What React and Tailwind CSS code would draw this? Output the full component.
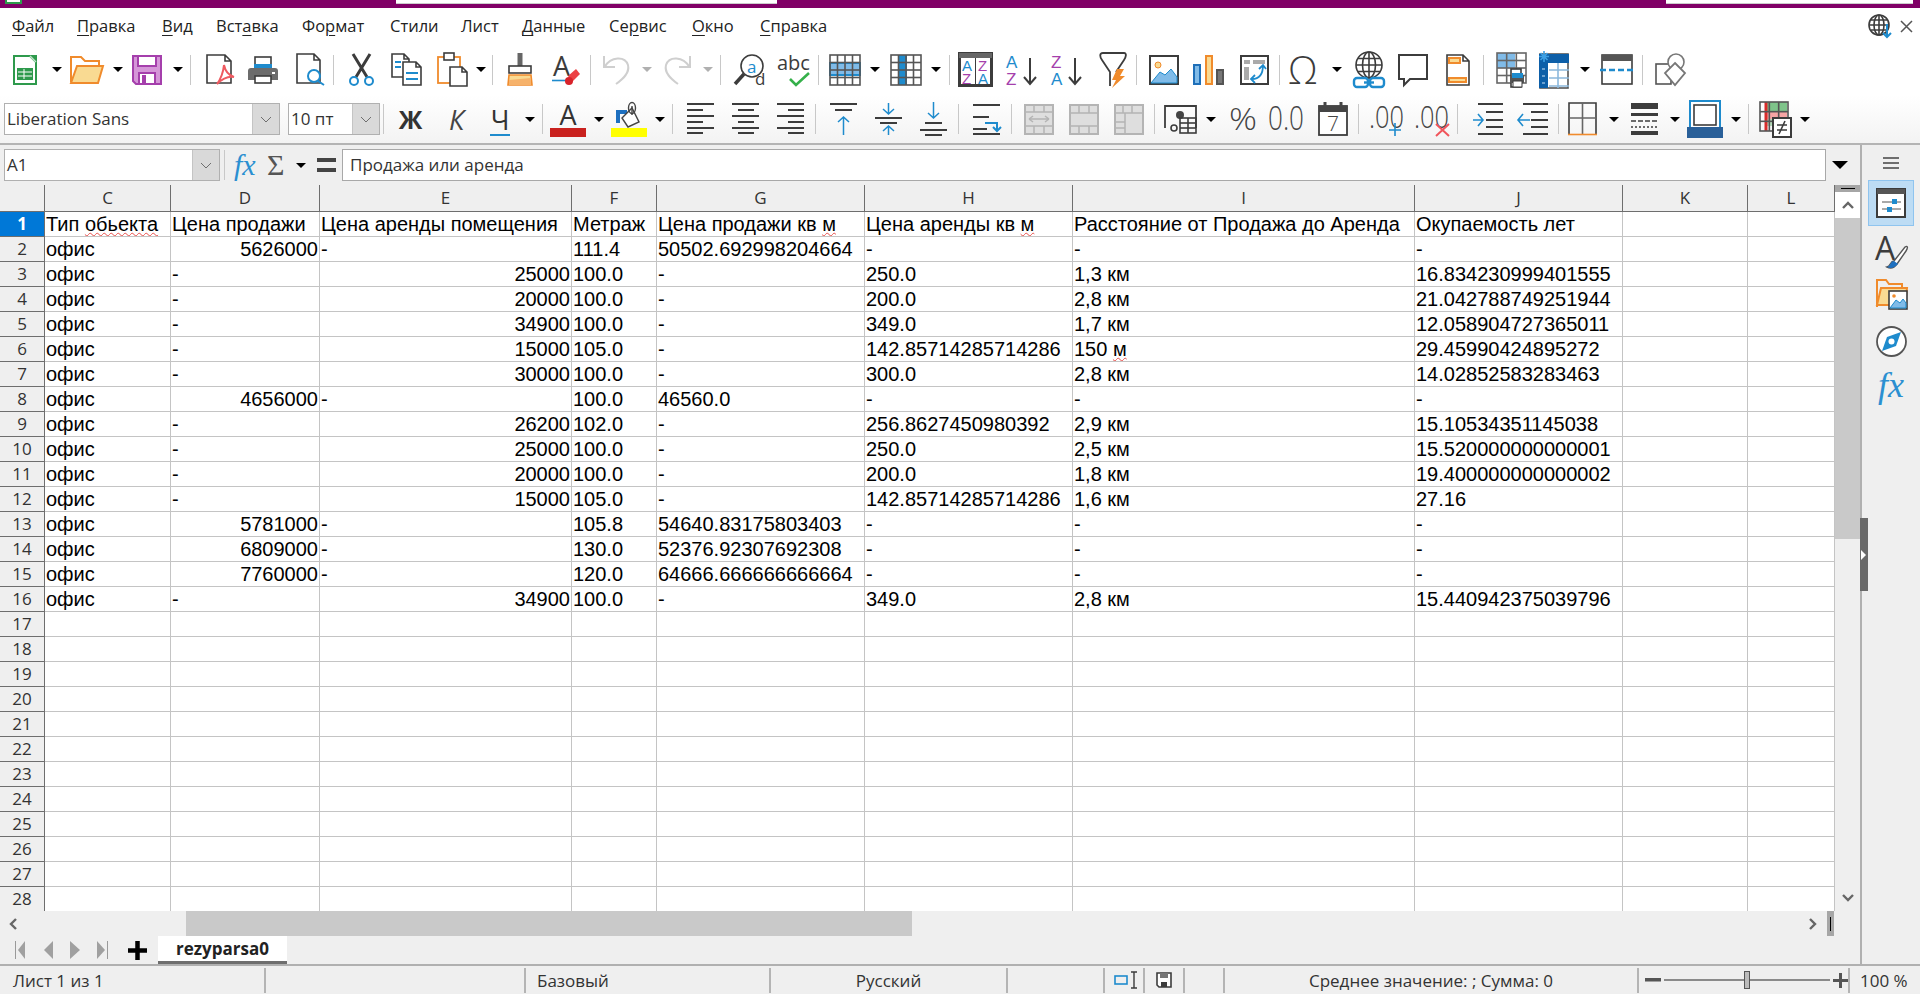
import React from "react";

const D = "#3c3c3c";
const B = "#1e8bcd";
const LB = "#80bbe8";
const O = "#f08b2c";
const LO = "#f9da92";
const P = "#a53fac";
const G = "#b4b4b4";

const Svg = ({ w, h, className = "", children }) => (
  <svg width={w} height={h} viewBox={`0 0 ${w} ${h}`} fill="none" className={`shrink-0 overflow-visible ${className}`}>
    {children}
  </svg>
);

const Caret = ({ className = "", gray }) => (
  <Svg w={10} h={5} className={className}>
    <polygon points="0,0 10,0 5,5" fill={gray ? "#b0b0b0" : "#000"} />
  </Svg>
);

const Sep = ({ className = "" }) => <div className={`w-px h-[30px] shrink-0 bg-[#c8c8c8] ${className}`} />;

const Doc = ({ w = 24, h = 30, x = 1, y = 1, fold = 6, stroke = D, fill = "#fff" }) => (
  <path
    d={`M${x} ${y}H${x + w - fold}L${x + w} ${y + fold}V${y + h}H${x}ZM${x + w - fold} ${y}V${y + fold}H${x + w}`}
    stroke={stroke}
    strokeWidth="1.6"
    fill={fill}
  />
);

const Grid = ({ x = 1, y = 1, w = 30, h = 30, cols = 3, rows = 3, color = D, sw = 1.6 }) => (
  <g stroke={color} strokeWidth={sw}>
    <rect x={x} y={y} width={w} height={h} />
    {Array.from({ length: cols - 1 }).map((_, i) => (
      <path key={i} d={`M${x + ((i + 1) * w) / cols} ${y}V${y + h}`} />
    ))}
    {Array.from({ length: rows - 1 }).map((_, i) => (
      <path key={i} d={`M${x} ${y + ((i + 1) * h) / rows}H${x + w}`} />
    ))}
  </g>
);

const Lines = ({ rows, color = D }) => (
  <g stroke={color} strokeWidth="2">
    {rows.map(([x1, x2, y], i) => (
      <path key={i} d={`M${x1} ${y}H${x2}`} />
    ))}
  </g>
);

const SheetIcon = ({ className }) => (
  <Svg w={24} h={30} className={className}>
    <path d="M1 1H17L23 7V29H1Z" fill="#fff" stroke="#2e9a4c" strokeWidth="2" />
    <path d="M16 0H24V8Z" fill="#2e9a4c" />
    <path d="M17 1L23 7" stroke="#bfe3c8" strokeWidth="1.5" />
    <rect x="4" y="13" width="16" height="12" fill="#2e9a4c" />
    <path d="M5 17H19M5 21H19M11 14V24" stroke="#fff" strokeWidth="1" />
  </Svg>
);

const FolderIcon = ({ className }) => (
  <Svg w={34} h={30} className={className}>
    <path d="M1 27V2H11L15 6H29V11" stroke={O} strokeWidth="2" />
    <path d="M7 11H33L28 28H1Z" fill={LO} stroke={O} strokeWidth="2" />
  </Svg>
);

const SaveIcon = ({ className }) => (
  <Svg w={30} h={30} className={className}>
    <path d="M1 1H29V29H4L1 26Z" fill="#d596d8" stroke={P} strokeWidth="2" />
    <rect x="6" y="1" width="18" height="10" fill="#fff" stroke={P} strokeWidth="2" />
    <rect x="7" y="18" width="16" height="11" fill="#fff" stroke={P} strokeWidth="2" />
    <rect x="10" y="20" width="4" height="9" fill={P} />
  </Svg>
);

const PdfIcon = ({ className }) => (
  <Svg w={29} h={31} className={className}>
    <Doc w={24} h={28} />
    <path d="M18 11C17 20 14 26 11 30C17 24 22 22 28 23C22 21 19 16 18 11Z" fill="#fff" stroke="#ee5a60" strokeWidth="2" />
  </Svg>
);

const PrintIcon = ({ className }) => (
  <Svg w={30} h={28} className={className}>
    <rect x="7" y="1" width="16" height="11" fill="#fff" stroke={D} strokeWidth="1.6" />
    <rect x="6" y="8" width="18" height="5" fill={B} />
    <path d="M0 15C0 13 1 12 3 12H27C29 12 30 13 30 15V24H0Z" fill="#6c6c6c" />
    <rect x="7" y="20" width="16" height="7" fill="#fff" stroke={D} strokeWidth="1.6" />
    <rect x="24" y="16" width="3" height="2" fill="#fff" />
  </Svg>
);

const PreviewIcon = ({ className }) => (
  <Svg w={29} h={33} className={className}>
    <Doc w={23} h={29} />
    <circle cx="18" cy="23" r="6" fill="#fff" stroke={B} strokeWidth="2" />
    <path d="M22 28L28 32" stroke={B} strokeWidth="2" />
  </Svg>
);

const CutIcon = ({ className }) => (
  <Svg w={27} h={34} className={className}>
    <path d="M5 1L19 24M22 1L8 24" stroke={D} strokeWidth="3" />
    <circle cx="6" cy="28" r="4" fill="#fff" stroke={B} strokeWidth="2" />
    <circle cx="21" cy="28" r="4" fill="#fff" stroke={B} strokeWidth="2" />
  </Svg>
);

const CopyIcon = ({ className }) => (
  <Svg w={31} h={33} className={className}>
    <Doc w={17} h={23} fold={5} />
    <path d="M4 9H10M4 14H10" stroke={B} strokeWidth="2" />
    <Doc x={12} y={9} w={18} h={23} fold={5} />
    <path d="M15 20H27M15 26H27" stroke={B} strokeWidth="2" />
  </Svg>
);

const PasteIcon = ({ className }) => (
  <Svg w={31} h={35} className={className}>
    <rect x="1" y="5" width="22" height="26" stroke={O} strokeWidth="1.8" />
    <rect x="7" y="1" width="10" height="7" fill="#fff" stroke={D} strokeWidth="1.6" />
    <Doc x={13} y={15} w={17} h={19} fold={5} />
  </Svg>
);

const BrushIcon = ({ className }) => (
  <Svg w={24} h={33} className={className}>
    <path d="M12 0V14" stroke="#666" strokeWidth="5" />
    <rect x="1" y="13" width="22" height="7" fill="#fff" stroke={D} strokeWidth="1.6" />
    <path d="M1 22H23L24 32H0Z" fill={LO} stroke={O} strokeWidth="1.6" />
    <path d="M1 27L23 25V32H1Z" fill="#f6b26b" />
  </Svg>
);

const ClearIcon = ({ className }) => (
  <Svg w={28} h={32} className={className}>
    <text x="1" y="22" fontSize="27" fill={D} className="font-['Open_Sans',sans-serif]">A</text>
    <path d="M0 26.5H15" stroke={B} strokeWidth="1.6" />
    <path d="M16 22L24 15L28 20L20 28Z" fill="#ec4044" />
    <circle cx="17" cy="27" r="4" fill="#d8232a" />
  </Svg>
);

const UndoIcon = ({ className, flip }) => (
  <Svg w={27} h={33} className={`${flip ? "-scale-x-100" : ""} ${className}`}>
    <path d="M1 3V14H12" stroke="#cfcfcf" strokeWidth="2" />
    <path d="M1.5 14C8 3 22 3 25 12C27 20 20 26 13 31" stroke="#cfcfcf" strokeWidth="2" />
  </Svg>
);

const FindIcon = ({ className }) => (
  <Svg w={32} h={33} className={className}>
    <circle cx="19" cy="13" r="11" stroke={D} strokeWidth="1.6" fill="#fff" />
    <text x="14" y="20" fontSize="17" fill={B} className="font-['Open_Sans',sans-serif]">a</text>
    <path d="M11 21L2 31" stroke={D} strokeWidth="3.5" />
    <text x="22" y="32" fontSize="17" fill={D} className="font-['Open_Sans',sans-serif]">d</text>
  </Svg>
);

const SpellIcon = ({ className }) => (
  <Svg w={33} h={34} className={className}>
    <text x="0" y="17" fontSize="20" fill={D} className="font-['Open_Sans',sans-serif]">abc</text>
    <path d="M13 26L19 32L32 20" stroke="#35b04a" strokeWidth="2.6" />
  </Svg>
);

const RowIcon = ({ className }) => (
  <Svg w={32} h={32} className={className}>
    <rect x="1" y="9" width="30" height="12" fill={LB} />
    <rect x="1" y="9" width="30" height="12" stroke={B} strokeWidth="2" />
    <Grid w={30} h={30} cols={4} rows={4} color="#555" />
  </Svg>
);

const ColIcon = ({ className }) => (
  <Svg w={32} h={32} className={className}>
    <rect x="9" y="1" width="8" height="30" fill={B} />
    <Grid w={30} h={30} cols={4} rows={4} color="#555" />
  </Svg>
);

const SortLetter = ({ x, y, c, t, s = 17 }) => (
  <text x={x} y={y} fontSize={s} fill={c} className="font-['Liberation_Sans',sans-serif]">{t}</text>
);

const SortIcon = ({ className }) => (
  <Svg w={35} h={35} className={className}>
    <rect x="1.5" y="1.5" width="32" height="32" fill="#fff" stroke={D} strokeWidth="3" />
    <rect x="1" y="1" width="33" height="5" fill="#666" />
    <path d="M17.5 6V33" stroke={D} />
    <SortLetter x={4} y={19} c={B} t="A" s={15} />
    <SortLetter x={4} y={32} c={P} t="Z" s={15} />
    <SortLetter x={20} y={19} c={P} t="Z" s={15} />
    <SortLetter x={20} y={32} c={B} t="A" s={15} />
  </Svg>
);

const SortDirIcon = ({ className, desc }) => (
  <Svg w={31} h={34} className={className}>
    <SortLetter x={0} y={15} c={desc ? P : B} t={desc ? "Z" : "A"} />
    <SortLetter x={0} y={32} c={desc ? B : P} t={desc ? "A" : "Z"} />
    <path d="M24 5V31M18 24L24 31L30 24" stroke={D} strokeWidth="2" />
  </Svg>
);

const FilterIcon = ({ className }) => (
  <Svg w={30} h={36} className={className}>
    <path d="M5 1H26C29 1 28 5 26 8L18 20M5 1C1 1 2 5 4 8L12 20V34" stroke={D} strokeWidth="1.8" />
    <path d="M26 17H19L14 28H18L14 36L27 24H22Z" fill={O} />
  </Svg>
);

const ImageIcon = ({ className }) => (
  <Svg w={30} h={30} className={className}>
    <rect x="1" y="1" width="28" height="28" fill="#fff" stroke={D} strokeWidth="2" />
    <circle cx="9" cy="10" r="3" fill={LO} stroke={O} />
    <path d="M2 28L11 17L16 20L22 14L28 22V28Z" fill={LB} stroke={B} />
  </Svg>
);

const ChartIcon = ({ className }) => (
  <Svg w={31} h={30} className={className}>
    <rect x="1" y="10" width="6" height="19" fill={LB} stroke="#1e6fb8" strokeWidth="2" />
    <rect x="13" y="1" width="6" height="28" fill={LO} stroke={O} strokeWidth="2" />
    <rect x="24" y="15" width="6" height="14" fill="#777" stroke="#555" strokeWidth="2" />
  </Svg>
);

const PivotIcon = ({ className }) => (
  <Svg w={29} h={30} className={className}>
    <rect x="1" y="1" width="27" height="28" fill="#fff" stroke={D} strokeWidth="2" />
    <path d="M4 5H10V9H4ZM13 5H25V9H13ZM4 12H9V25H4Z" fill="#aaa" />
    <path d="M12 24C20 24 23 19 23 10M19 14L23 10L26 14M15 20L11 24L15 28" stroke={B} strokeWidth="1.8" />
  </Svg>
);

const OmegaIcon = ({ className }) => (
  <Svg w={31} h={36} className={className}>
    <text x="-1" y="32" fontSize="38" fill={D} fontWeight="300" className="font-['Open_Sans',sans-serif]">Ω</text>
  </Svg>
);

const Globe = ({ cx = 16, cy = 14, r = 13, stroke = D }) => (
  <g stroke={stroke} strokeWidth="1.6">
    <circle cx={cx} cy={cy} r={r} fill="#fff" />
    <ellipse cx={cx} cy={cy} rx={r / 2} ry={r} />
    <path d={`M${cx} ${cy - r}V${cy + r}M${cx - r} ${cy}H${cx + r}M${cx - r + 2} ${cy - r / 2}H${cx + r - 2}M${cx - r + 2} ${cy + r / 2}H${cx + r - 2}`} />
  </g>
);

const LinkIcon = ({ className }) => (
  <Svg w={32} h={38} className={className}>
    <Globe />
    <rect x="1" y="27" width="14" height="9" rx="3" fill="#fff" stroke={B} strokeWidth="2.4" />
    <rect x="17" y="27" width="14" height="9" rx="3" fill="#fff" stroke={B} strokeWidth="2.4" />
    <path d="M11 31.5H21" stroke={B} strokeWidth="2.4" />
  </Svg>
);

const CommentIcon = ({ className }) => (
  <Svg w={30} h={32} className={className}>
    <path d="M1 1H29V25H12L6 31V25H1Z" fill="#fff" stroke={D} strokeWidth="2" />
  </Svg>
);

const HeaderIcon = ({ className }) => (
  <Svg w={24} h={32} className={className}>
    <Doc w={22} h={30} />
    <rect x="3" y="4" width="11" height="5" fill={LO} stroke={O} strokeWidth="2" />
    <rect x="3" y="24" width="17" height="4" fill={LO} stroke={O} strokeWidth="2" />
  </Svg>
);

const AreaIcon = ({ className }) => (
  <Svg w={31} h={36} className={className}>
    <rect x="1" y="1" width="18" height="15" fill={LB} />
    <Grid w={29} h={30} cols={3} rows={4} color="#666" />
    <rect x="15" y="17" width="10" height="18" fill="#fff" stroke={D} strokeWidth="1.6" />
    <path d="M14 26C14 24 15 23 17 23H28V31H14Z" fill="#555" />
    <rect x="16" y="21" width="11" height="5" fill={B} />
    <rect x="17" y="29" width="9" height="6" fill="#fff" stroke={D} />
  </Svg>
);

const FreezeIcon = ({ className }) => (
  <Svg w={30} h={38} className={className}>
    <rect x="1" y="3" width="28" height="34" fill="#fff" stroke="#555" strokeWidth="1.6" />
    <rect x="0" y="3" width="30" height="9" fill="#0d5fa8" />
    <rect x="0" y="3" width="9" height="34" fill="#0d5fa8" />
    <path d="M10 19H30M10 27H30M10 35H30M19 12V37M3 18H6M3 25H6M3 32H6" stroke="#8cb8dc" strokeWidth="1.6" />
    <path d="M5 0V11M0 5.5H10M1.5 2L8.5 9M8.5 2L1.5 9" stroke="#3da0e4" strokeWidth="1.6" />
  </Svg>
);

const SplitIcon = ({ className }) => (
  <Svg w={34} h={31} className={className}>
    <rect x="2" y="1" width="30" height="29" fill="#fff" stroke={D} strokeWidth="1.6" />
    <rect x="2" y="1" width="30" height="6" fill="#555" />
    <path d="M0 16H34" stroke={B} strokeWidth="2.4" strokeDasharray="6 3" />
  </Svg>
);

const ShapesIcon = ({ className }) => (
  <Svg w={31} h={33} className={className}>
    <rect x="1" y="11" width="15" height="20" fill="#fff" stroke="#555" strokeWidth="1.6" />
    <circle cx="21" cy="9" r="8" fill="#fff" stroke="#777" strokeWidth="1.6" />
    <path d="M20 10L30 20L20 32L10 20Z" fill="#fff" stroke="#777" strokeWidth="1.8" />
  </Svg>
);

const AlignIcon = ({ kind, className }) => {
  const x = kind === "left" ? [0, 16] : kind === "center" ? [6, 22] : [11, 27];
  const rows = [104, 110, 116, 122, 128, 133].map((y, i) => (i % 2 ? [x[0], x[1], y - 103] : [0, 27, y - 103]));
  return (
    <Svg w={27} h={32} className={className}>
      <Lines rows={rows} />
    </Svg>
  );
};

const VAlignIcon = ({ kind, className }) => (
  <Svg w={27} h={34} className={className}>
    {kind === "top" && (
      <>
        <Lines rows={[[0, 27, 2], [5, 22, 8]]} />
        <path d="M13.5 33V15M8 20L13.5 15L19 20" stroke={B} strokeWidth="1.5" />
      </>
    )}
    {kind === "mid" && (
      <>
        <Lines rows={[[0, 27, 16], [5, 22, 21]]} />
        <path d="M13.5 1V12M8 7L13.5 12L19 7M13.5 33V24M8 29L13.5 24L19 29" stroke={B} strokeWidth="1.5" />
      </>
    )}
    {kind === "bot" && (
      <>
        <Lines rows={[[5, 22, 21], [0, 27, 28], [5, 22, 33]]} />
        <path d="M13.5 0V16M8 11L13.5 16L19 11" stroke={B} strokeWidth="1.5" />
      </>
    )}
  </Svg>
);

const WrapIcon = ({ className }) => (
  <Svg w={28} h={33} className={className}>
    <Lines rows={[[0, 27, 2], [0, 16, 14], [0, 14, 26], [0, 27, 31]]} />
    <path d="M12 20H24V28M20 24L24 28L28 24" stroke={B} strokeWidth="2" />
  </Svg>
);

const MergeIcon = ({ v, className }) => (
  <Svg w={30} h={31} className={className}>
    <rect x="1" y="1" width="28" height="29" fill="#dedede" stroke={G} strokeWidth="2" />
    {v === 0 && (
      <path d="M1 8H29M1 22H29M10 1V8M20 1V8M10 22V30M20 22V30M5 15H25M5 15L9 12M5 15L9 18M25 15L21 12M25 15L21 18" stroke={G} strokeWidth="1.5" />
    )}
    {v === 1 && <path d="M1 9H29M1 22H29M10 1V9M20 1V9M10 22V30M20 22V30" stroke={G} strokeWidth="1.5" />}
    {v === 2 && <path d="M1 9H29M1 18H11M1 24H11M11 9V30M18 1V9M9 1V9" stroke={G} strokeWidth="1.5" />}
  </Svg>
);

const CurrencyIcon = ({ className }) => (
  <Svg w={33} h={30} className={className}>
    <path d="M1 24V2H32V24" stroke={D} strokeWidth="1.8" />
    <circle cx="16" cy="11" r="4" fill="#444" />
    <Grid x={16} y={14} w={16} h={15} cols={2} rows={3} color={D} />
    <circle cx="10" cy="24" r="3" stroke={D} strokeWidth="1.6" />
  </Svg>
);

const NumText = ({ x = 0, y = 24, t, s = 30, w }) => (
  <text x={x} y={y} fontSize={s} fill="#444" fontWeight="300" textLength={w} lengthAdjust="spacingAndGlyphs" className="font-['Open_Sans',sans-serif]">
    {t}
  </text>
);

const DateIcon = ({ className }) => (
  <Svg w={30} h={34} className={className}>
    <rect x="1" y="4" width="28" height="29" fill="#fff" stroke={D} strokeWidth="1.8" />
    <rect x="1" y="4" width="28" height="6" fill="#444" />
    <path d="M7 0V6M23 0V6" stroke="#444" strokeWidth="3" />
    <NumText x={9} y={29} t="7" s={21} />
  </Svg>
);

const DecIcon = ({ add, className }) => (
  <Svg w={37} h={36} className={className}>
    <NumText x={0} y={27} t=".00" s={31} w={35} />
    {add ? (
      <path d="M26 22V35M20 29H32" stroke={B} strokeWidth="1.6" />
    ) : (
      <path d="M22 23L35 35M35 23L22 35" stroke="#f0555b" strokeWidth="2" />
    )}
  </Svg>
);

const IndentIcon = ({ rev, className }) => (
  <Svg w={30} h={33} className={className}>
    <path d="M5 1H30M13 9H30M13 17H30M13 24H30M5 31H30" stroke={D} strokeWidth="2" />
    {rev ? (
      <path d="M12 17H0M5 11L0 17L5 23" stroke={B} strokeWidth="1.6" />
    ) : (
      <path d="M0 17H10M5 11L10 17L5 23" stroke={B} strokeWidth="1.6" />
    )}
  </Svg>
);

const BorderIcon = ({ className }) => (
  <Svg w={29} h={34} className={className}>
    <path d="M1 32V1H28V32" stroke={D} strokeWidth="1.6" />
    <path d="M14.5 1V32M1 16H28" stroke="#666" strokeWidth="1.6" />
    <path d="M0 32.5H29" stroke={O} strokeWidth="1.6" />
  </Svg>
);

const BorderStyleIcon = ({ className }) => (
  <Svg w={27} h={34} className={className}>
    <rect x="0" y="1" width="27" height="6" fill={D} />
    <rect x="0" y="11" width="27" height="3" fill={D} />
    <path d="M0 19H27" stroke={D} strokeWidth="1.6" strokeDasharray="5 2" />
    <path d="M0 25H27" stroke={D} strokeWidth="1.4" strokeDasharray="2 2" />
    <rect x="0" y="29" width="27" height="4" fill={D} />
  </Svg>
);

const BorderColorIcon = ({ className }) => (
  <Svg w={36} h={38} className={className}>
    <rect x="3" y="1" width="30" height="28" fill="#fff" stroke={B} strokeWidth="2" />
    <rect x="7" y="5" width="22" height="20" stroke={D} strokeWidth="1.6" />
    <rect x="0" y="27" width="36" height="11" fill="#2a6099" />
  </Svg>
);

const CondIcon = ({ className }) => (
  <Svg w={33} h={37} className={className}>
    <rect x="6" y="1" width="22" height="9" fill="#7fc48a" />
    <rect x="6" y="10" width="22" height="8" fill="#f6a5a5" />
    <rect x="6" y="18" width="10" height="7" fill="#b5dcb9" />
    <path d="M7 1V30" stroke="#d92b2b" strokeWidth="3" />
    <Grid w={28} h={29} cols={3} rows={3} color="#555" />
    <rect x="14" y="17" width="18" height="19" fill="#fff" stroke={D} strokeWidth="2" />
    <path d="M18 24H28M18 29H28M26 20L20 33" stroke={D} strokeWidth="1.6" />
  </Svg>
);

const HighlightIcon = ({ className }) => (
  <Svg w={36} h={36} className={className}>
    <path d="M5 9H16V13H9V22H5Z" fill="#1e70c0" />
    <path d="M11 17L21 7L28 21L17 26Z" fill="#fff" stroke="#444" strokeWidth="1.4" />
    <ellipse cx="21" cy="7" rx="3.5" ry="5.5" stroke="#444" strokeWidth="1.4" />
    <path d="M21 5V14" stroke="#444" strokeWidth="1.4" />
    <rect x="0" y="27" width="36" height="9" fill="#ffff00" />
  </Svg>
);

const Chevron = () => (
  <Svg w={12} h={7}>
    <path d="M1 1L6 6L11 1" stroke="#6e6e6e" strokeWidth="1" />
  </Svg>
);

const Combo = ({ className, btn, text }) => (
  <div className={`h-[32px] shrink-0 flex bg-white border border-[#b0b0b0] ${className}`}>
    <div className="flex-1 pl-[2px] text-[17px] leading-[30px] text-[#333] whitespace-nowrap overflow-hidden">{text}</div>
    <div className={`${btn} h-full bg-[#d9d9d9] border-l border-[#c4c4c4] flex items-center justify-center`}>
      <Chevron />
    </div>
  </div>
);

const menu = [
  ["w-[65px]", "", "Ф", "айл"],
  ["w-[85px]", "", "П", "равка"],
  ["w-[54px]", "", "В", "ид"],
  ["w-[86px]", "Вст", "а", "вка"],
  ["w-[88px]", "Фо", "р", "мат"],
  ["w-[71px]", "Стили", "", ""],
  ["w-[61px]", "Лист", "", ""],
  ["w-[87px]", "", "Д", "анные"],
  ["w-[83px]", "Се", "р", "вис"],
  ["w-[68px]", "", "О", "кно"],
  ["w-[90px]", "", "С", "правка"],
];

const MenuBar = () => (
  <div className="h-[36px] bg-white flex items-center pl-[12px] relative shrink-0">
    {menu.map(([w, a, u, b]) => (
      <div key={a + u + b} className={`${w} text-[16.5px] text-[#222]`}>
        {a}
        <span className="underline underline-offset-[3px]">{u}</span>
        {b}
      </div>
    ))}
    <div className="flex-1" />
    <Svg w={24} h={25} className="mr-[8px]">
      <Globe cx={11} cy={11} r={10} />
      <path d="M19 10V23M15 19L19 23L23 19" stroke={B} strokeWidth="2" />
    </Svg>
    <Svg w={13} h={13} className="mr-[7px]">
      <path d="M1 1L12 12M12 1L1 12" stroke="#555" strokeWidth="1.5" />
    </Svg>
  </div>
);

const Toolbar1 = () => (
  <div className="h-[51px] bg-white flex items-center shrink-0">
    <SheetIcon className="ml-[13px]" />
    <Caret className="ml-[15px]" />
    <FolderIcon className="ml-[8px]" />
    <Caret className="ml-[9px]" />
    <SaveIcon className="ml-[9px]" />
    <Caret className="ml-[11px]" />
    <Sep className="ml-[7px]" />
    <PdfIcon className="ml-[15px]" />
    <PrintIcon className="ml-[13px]" />
    <PreviewIcon className="ml-[18px]" />
    <Sep className="ml-[8px]" />
    <CutIcon className="ml-[14px]" />
    <CopyIcon className="ml-[16px]" />
    <PasteIcon className="ml-[15px]" />
    <Caret className="ml-[8px]" />
    <Sep className="ml-[6px]" />
    <BrushIcon className="ml-[15px]" />
    <ClearIcon className="ml-[20px]" />
    <Sep className="ml-[10px]" />
    <UndoIcon className="ml-[12px]" />
    <Caret gray className="ml-[12px]" />
    <UndoIcon flip className="ml-[12px]" />
    <Caret gray className="ml-[12px]" />
    <Sep className="ml-[7px]" />
    <FindIcon className="ml-[12px]" />
    <SpellIcon className="ml-[12px]" />
    <Sep className="ml-[8px]" />
    <RowIcon className="ml-[10px]" />
    <Caret className="ml-[9px]" />
    <ColIcon className="ml-[10px]" />
    <Caret className="ml-[9px]" />
    <Sep className="ml-[8px]" />
    <SortIcon className="ml-[8px]" />
    <SortDirIcon className="ml-[13px]" />
    <SortDirIcon desc className="ml-[14px]" />
    <FilterIcon className="ml-[16px]" />
    <Sep className="ml-[8px]" />
    <ImageIcon className="ml-[12px]" />
    <ChartIcon className="ml-[14px]" />
    <PivotIcon className="ml-[16px]" />
    <Sep className="ml-[10px]" />
    <OmegaIcon className="ml-[9px]" />
    <Caret className="ml-[12px]" />
    <LinkIcon className="ml-[11px]" />
    <CommentIcon className="ml-[13px]" />
    <HeaderIcon className="ml-[18px]" />
    <Sep className="ml-[13px]" />
    <AreaIcon className="ml-[12px]" />
    <FreezeIcon className="ml-[12px]" />
    <Caret className="ml-[11px]" />
    <SplitIcon className="ml-[10px]" />
    <Sep className="ml-[8px]" />
    <ShapesIcon className="ml-[12px]" />
  </div>
);

const Toolbar2 = () => (
  <div className="h-[50px] bg-gradient-to-b from-white to-[#f3f3f3] flex items-center shrink-0 border-b-2 border-[#b4b4b4]">
    <Combo className="ml-[4px] w-[276px]" btn="w-[27px]" text="Liberation Sans" />
    <Combo className="ml-[8px] w-[92px]" btn="w-[27px]" text="10 пт" />
    <Sep className="ml-[3px]" />
    <div className="ml-[14px] w-[25px] text-center text-[25px] font-bold text-[#333] leading-none">Ж</div>
    <div className="ml-[25px] w-[17px] text-center text-[27px] italic text-[#444] leading-none">К</div>
    <div className="ml-[25px] w-[20px] flex flex-col items-center text-[27px] text-[#333] leading-none relative">
      Ч
      <div className="absolute -bottom-[3px] w-[20px] h-[2px] bg-[#1e8bcd]" />
    </div>
    <Caret className="ml-[15px]" />
    <Sep className="ml-[7px]" />
    <div className="ml-[7px] w-[36px] flex flex-col items-center text-[27px] text-[#333] leading-[26px]">
      А
      <div className="w-[36px] h-[9px] bg-[#c9211e]" />
    </div>
    <Caret className="ml-[8px]" />
    <HighlightIcon className="ml-[7px]" />
    <Caret className="ml-[8px]" />
    <Sep className="ml-[7px]" />
    <AlignIcon kind="left" className="ml-[14px]" />
    <AlignIcon kind="center" className="ml-[18px]" />
    <AlignIcon kind="right" className="ml-[18px]" />
    <Sep className="ml-[11px]" />
    <VAlignIcon kind="top" className="ml-[14px]" />
    <VAlignIcon kind="mid" className="ml-[18px]" />
    <VAlignIcon kind="bot" className="ml-[18px]" />
    <Sep className="ml-[11px]" />
    <WrapIcon className="ml-[14px]" />
    <Sep className="ml-[10px]" />
    <MergeIcon v={0} className="ml-[12px]" />
    <MergeIcon v={1} className="ml-[15px]" />
    <MergeIcon v={2} className="ml-[15px]" />
    <Sep className="ml-[10px]" />
    <CurrencyIcon className="ml-[9px]" />
    <Caret className="ml-[9px]" />
    <Svg w={24} h={32} className="ml-[15px]">
      <NumText x={-2} y={27} t="%" s={32} w={28} />
    </Svg>
    <Svg w={36} h={32} className="ml-[13px]">
      <NumText x={0} y={27} t="0.0" s={33} w={36} />
    </Svg>
    <DateIcon className="ml-[14px]" />
    <Sep className="ml-[10px]" />
    <DecIcon add className="ml-[10px]" />
    <DecIcon className="ml-[8px]" />
    <Sep className="ml-[6px]" />
    <IndentIcon className="ml-[15px]" />
    <IndentIcon rev className="ml-[15px]" />
    <Sep className="ml-[10px]" />
    <BorderIcon className="ml-[9px]" />
    <Caret className="ml-[12px]" />
    <BorderStyleIcon className="ml-[12px]" />
    <Caret className="ml-[12px]" />
    <BorderColorIcon className="ml-[7px]" />
    <Caret className="ml-[8px]" />
    <Sep className="ml-[7px]" />
    <CondIcon className="ml-[10px]" />
    <Caret className="ml-[8px]" />
  </div>
);

const FormulaBar = () => (
  <div className="h-[40px] bg-[#efefef] flex items-center shrink-0 pl-[4px]">
    <Combo className="w-[216px]" btn="w-[27px]" text="A1" />
    <Sep className="ml-[4px]" />
    <div className="ml-[9px] w-[24px] font-['Liberation_Serif',serif] italic text-[30px] leading-none text-[#2b8fd1]">fx</div>
    <div className="ml-[9px] w-[20px] font-['Liberation_Serif',serif] text-[30px] leading-none text-[#555]">Σ</div>
    <Caret className="ml-[9px]" />
    <div className="ml-[11px] w-[19px] flex flex-col gap-[6px]">
      <div className="h-[4px] bg-[#444]" />
      <div className="h-[4px] bg-[#444]" />
    </div>
    <div className="ml-[6px] w-[1484px] h-[32px] bg-white border border-[#a8a8a8] pl-[7px] text-[17px] leading-[30px] text-[#333]">
      Продажа или аренда
    </div>
    <Svg w={16} h={8} className="ml-[6px]">
      <polygon points="0,0 16,0 8,8" fill="#000" />
    </Svg>
  </div>
);

function Sq({ children }) {
  return <span className="underline decoration-wavy decoration-[#e8504c] decoration-1 underline-offset-[1px]">{children}</span>;
}

const cols = ["C", "D", "E", "F", "G", "H", "I", "J", "K", "L"];
const head = [
  <>Тип <Sq>обьекта</Sq></>,
  "Цена продажи",
  "Цена аренды помещения",
  "Метраж",
  <>Цена продажи кв <Sq>м</Sq></>,
  <>Цена аренды кв <Sq>м</Sq></>,
  "Расстояние от Продажа до Аренда",
  "Окупаемость лет",
];

const rows = [
  ["офис", "5626000", "-", "111.4", "50502.692998204664", "-", "-", "-"],
  ["офис", "-", "25000", "100.0", "-", "250.0", "1,3 км", "16.834230999401555"],
  ["офис", "-", "20000", "100.0", "-", "200.0", "2,8 км", "21.042788749251944"],
  ["офис", "-", "34900", "100.0", "-", "349.0", "1,7 км", "12.058904727365011"],
  ["офис", "-", "15000", "105.0", "-", "142.85714285714286", "150 м", "29.45990424895272"],
  ["офис", "-", "30000", "100.0", "-", "300.0", "2,8 км", "14.02852583283463"],
  ["офис", "4656000", "-", "100.0", "46560.0", "-", "-", "-"],
  ["офис", "-", "26200", "102.0", "-", "256.8627450980392", "2,9 км", "15.10534351145038"],
  ["офис", "-", "25000", "100.0", "-", "250.0", "2,5 км", "15.520000000000001"],
  ["офис", "-", "20000", "100.0", "-", "200.0", "1,8 км", "19.400000000000002"],
  ["офис", "-", "15000", "105.0", "-", "142.85714285714286", "1,6 км", "27.16"],
  ["офис", "5781000", "-", "105.8", "54640.83175803403", "-", "-", "-"],
  ["офис", "6809000", "-", "130.0", "52376.92307692308", "-", "-", "-"],
  ["офис", "7760000", "-", "120.0", "64666.666666666664", "-", "-", "-"],
  ["офис", "-", "34900", "100.0", "-", "349.0", "2,8 км", "15.440942375039796"],
];

const cellCls =
  "border-r border-b border-[#c4c4c4] bg-white px-[1px] text-[20px] leading-[24px] text-black whitespace-nowrap overflow-hidden font-['Liberation_Sans',sans-serif]";

const Sheet = () => (
  <div className="w-[1835px] h-[726px] overflow-hidden bg-white grid grid-cols-[45px_126px_149px_252px_85px_208px_208px_342px_208px_125px_87px] grid-rows-[27px] auto-rows-[25px] content-start">
    <div className="bg-[#efefef] border-r border-b border-[#6e6e6e]" />
    {cols.map((c) => (
      <div key={c} className="bg-[#efefef] border-r border-b border-[#6e6e6e] text-center text-[17px] leading-[25px] text-[#333]">
        {c}
      </div>
    ))}
    {Array.from({ length: 28 }).map((_, i) => {
      const r = i === 0 ? head : rows[i - 1] || [];
      const cells = [...r, ...Array(10 - r.length).fill("")];
      return (
        <React.Fragment key={i}>
          <div
            className={
              i === 0
                ? "bg-[#0078d7] text-white font-bold border-r border-b border-[#6e6e6e] text-center text-[17px] leading-[24px]"
                : "bg-[#efefef] text-[#333] border-r border-b border-[#6e6e6e] text-center text-[17px] leading-[24px]"
            }
          >
            {i + 1}
          </div>
          {cells.map((v, j) => {
            const right = i > 0 && (j === 1 || j === 2) && v !== "-" && v !== "";
            return (
              <div key={j} className={`${cellCls} ${right ? "text-right" : "text-left"}`}>
                {v === "150 м" ? <>150 <Sq>м</Sq></> : v}
              </div>
            );
          })}
        </React.Fragment>
      );
    })}
  </div>
);

const VScroll = () => (
  <div className="w-[25px] h-[726px] flex flex-col bg-[#efefef] shrink-0">
    <div className="h-[7px] bg-[#a6a6a6] flex items-center justify-center">
      <div className="w-[14px] h-px bg-black" />
    </div>
    <div className="h-[26px] bg-white flex items-center justify-center">
      <Svg w={12} h={8}><path d="M1 7L6 2L11 7" stroke="#666" strokeWidth="2.4" /></Svg>
    </div>
    <div className="h-[321px] bg-[#c9c9c9]" />
    <div className="flex-1" />
    <div className="h-[26px] flex items-center justify-center">
      <Svg w={12} h={8}><path d="M1 1L6 6L11 1" stroke="#666" strokeWidth="2.4" /></Svg>
    </div>
  </div>
);

const HScroll = () => (
  <div className="h-[25px] bg-[#efefef] flex items-center shrink-0">
    <div className="w-[186px] pl-[9px]">
      <Svg w={8} h={12}><path d="M7 1L2 6L7 11" stroke="#666" strokeWidth="2.4" /></Svg>
    </div>
    <div className="w-[726px] h-full bg-[#c9c9c9]" />
    <div className="w-[905px] flex justify-end">
      <Svg w={8} h={12}><path d="M1 1L6 6L1 11" stroke="#666" strokeWidth="2.4" /></Svg>
    </div>
    <div className="ml-[10px] w-[7px] h-full bg-[#a6a6a6] flex items-center justify-center">
      <div className="w-px h-[14px] bg-black" />
    </div>
  </div>
);

const Tabs = () => (
  <div className="h-[28px] bg-[#efefef] flex shrink-0">
    <div className="w-[158px] flex items-center">
      <Svg w={11} h={20} className="ml-[15px]">
        <path d="M0.5 1V19" stroke="#9a9a9a" />
        <polygon points="10,1 10,19 3,10" fill="#a0a0a0" />
      </Svg>
      <Svg w={9} h={20} className="ml-[18px]"><polygon points="9,1 9,19 0,10" fill="#a0a0a0" /></Svg>
      <Svg w={10} h={20} className="ml-[17px]"><polygon points="0,1 0,19 10,10" fill="#a0a0a0" /></Svg>
      <Svg w={11} h={20} className="ml-[17px]">
        <polygon points="0,1 0,19 8,10" fill="#a0a0a0" />
        <path d="M10.5 1V19" stroke="#9a9a9a" />
      </Svg>
      <Svg w={19} h={19} className="ml-[20px]"><path d="M9.5 0V19M0 9.5H19" stroke="#000" strokeWidth="4.5" /></Svg>
    </div>
    <div className="w-[129px] h-[28px] bg-white border-b-[3px] border-[#6e6e6e] text-center text-[17px] font-bold leading-[26px] text-[#222]">
      rezyparsa0
    </div>
  </div>
);

const statusCell = "h-[25px] border-r-2 border-[#b4b4b4] leading-[25px] shrink-0";

const Status = () => (
  <div className="h-[30px] bg-[#efefef] border-t-2 border-[#b0b0b0] flex items-center text-[17px] text-[#333] shrink-0">
    <div className={`${statusCell} w-[266px] pl-[13px]`}>Лист 1 из 1</div>
    <div className={`${statusCell} w-[260px]`} />
    <div className={`${statusCell} w-[245px] pl-[11px]`}>Базовый</div>
    <div className={`${statusCell} w-[237px] text-center`}>Русский</div>
    <div className={`${statusCell} w-[97px]`} />
    <div className={`${statusCell} w-[40px] flex items-center pl-[9px]`}>
      <Svg w={24} h={18}>
        <rect x="1" y="5" width="12" height="8" stroke={B} strokeWidth="1.6" />
        <path d="M17 1H23M20 1V17M17 17H23" stroke={D} strokeWidth="1.4" />
      </Svg>
    </div>
    <div className={`${statusCell} w-[40px] flex items-center justify-center`}>
      <Svg w={16} h={16}>
        <path d="M1 1H15V15H3L1 13Z" fill="#fff" stroke={D} strokeWidth="1.6" />
        <rect x="4" y="1" width="8" height="5" fill="#777" />
        <rect x="5" y="10" width="6" height="5" fill={D} />
      </Svg>
    </div>
    <div className={`${statusCell} w-[40px]`} />
    <div className={`${statusCell} w-[414px] text-center`}>Среднее значение: ; Сумма: 0</div>
    <div className={`${statusCell} w-[211px] flex items-center pl-[6px]`}>
      <Svg w={16} h={4}><rect width="16" height="3.5" fill="#555" /></Svg>
      <div className="ml-[3px] w-[166px] h-[2px] bg-[#8a8a8a] flex justify-center items-center">
        <div className="w-[6px] h-[18px] bg-[#bbb] border border-[#555]" />
      </div>
      <Svg w={15} h={15} className="ml-[3px]"><path d="M7.5 0V15M0 7.5H15" stroke="#555" strokeWidth="3" /></Svg>
    </div>
    <div className="pl-[10px] leading-[25px]">100 %</div>
  </div>
);

const Sidebar = () => (
  <div className="w-[60px] h-[819px] bg-[#efefef] border-l-2 border-[#b0b0b0] flex flex-col items-center relative">
    <div className="absolute -left-[2px] top-[373px] w-[8px] h-[73px] bg-[#696969] flex items-center">
      <Svg w={6} h={10}><polygon points="1,0 1,10 6,5" fill="#fff" /></Svg>
    </div>
    <Svg w={16} h={12} className="mt-[12px]">
      <path d="M0 1H16M0 6H16M0 11H16" stroke="#444" strokeWidth="1.4" />
    </Svg>
    <div className="mt-[11px] w-[46px] h-[46px] bg-[#bddcf4] border border-[#8fc4ef] flex items-center justify-center">
      <Svg w={30} h={30}>
        <rect x="1" y="1" width="28" height="28" fill="#fff" stroke={D} strokeWidth="2" />
        <rect x="1" y="1" width="28" height="5" fill="#555" />
        <path d="M6 14H25M6 21H25" stroke="#555" />
        <rect x="16" y="11" width="5" height="5" fill={B} />
        <rect x="11" y="19" width="5" height="5" fill={B} />
      </Svg>
    </div>
    <Svg w={33} h={33} className="mt-[10px]">
      <text x="0" y="24" fontSize="32" fill={D} className="font-['Open_Sans',sans-serif]">A</text>
      <path d="M12 31C16 30 15 25 19 25L30 11C33 9 33 12 31 15L22 28C19 32 16 33 12 31Z" fill="#fff" stroke="#555" strokeWidth="1.4" />
      <path d="M12 31C16 30 15 25 19 25L23 28C19 32 16 33 12 31Z" fill="#1e70c0" />
    </Svg>
    <Svg w={31} h={31} className="mt-[10px]">
      <path d="M1 28V1H10L13 5H26V9" stroke={O} strokeWidth="2" />
      <path d="M5 9H31L29 26H1Z" fill={LO} stroke={O} strokeWidth="2" />
      <rect x="13" y="12" width="18" height="18" fill="#fff" stroke={D} strokeWidth="1.6" />
      <circle cx="18" cy="17" r="1.8" fill={O} />
      <path d="M14 29L20 21L24 24L27 20L30 24V29Z" fill={LB} stroke={B} />
    </Svg>
    <Svg w={31} h={31} className="mt-[16px]">
      <circle cx="15.5" cy="15.5" r="14.5" fill="#fff" stroke="#555" strokeWidth="1.8" />
      <path d="M25 6L20 20L6 25L11 11Z" fill="#1e8bcd" />
      <circle cx="15.5" cy="15.5" r="3" fill="#fff" />
    </Svg>
    <div className="mt-[10px] font-['Liberation_Serif',serif] italic text-[36px] leading-none text-[#2b8fd1]">fx</div>
  </div>
);

export default function App() {
  return (
    <div className="w-[1920px] h-[994px] overflow-hidden flex flex-col font-['Open_Sans',sans-serif] bg-white">
      <div className="h-[8px] bg-[#800066] flex shrink-0">
        <div className="ml-[5px] w-[17px] h-[4px] bg-white border-x-2 border-b-2 border-[#2e9a4c]" />
        <div className="ml-[374px] w-[381px] h-[4px] bg-white border-b border-[#ccc]" />
        <div className="ml-[889px] w-[247px] h-[4px] bg-white border-b border-[#ccc]" />
      </div>
      <MenuBar />
      <Toolbar1 />
      <Toolbar2 />
      <div className="h-[819px] flex shrink-0">
        <div className="w-[1860px] flex flex-col">
          <FormulaBar />
          <div className="h-[726px] flex shrink-0">
            <Sheet />
            <VScroll />
          </div>
          <HScroll />
          <Tabs />
        </div>
        <Sidebar />
      </div>
      <Status />
    </div>
  );
}
